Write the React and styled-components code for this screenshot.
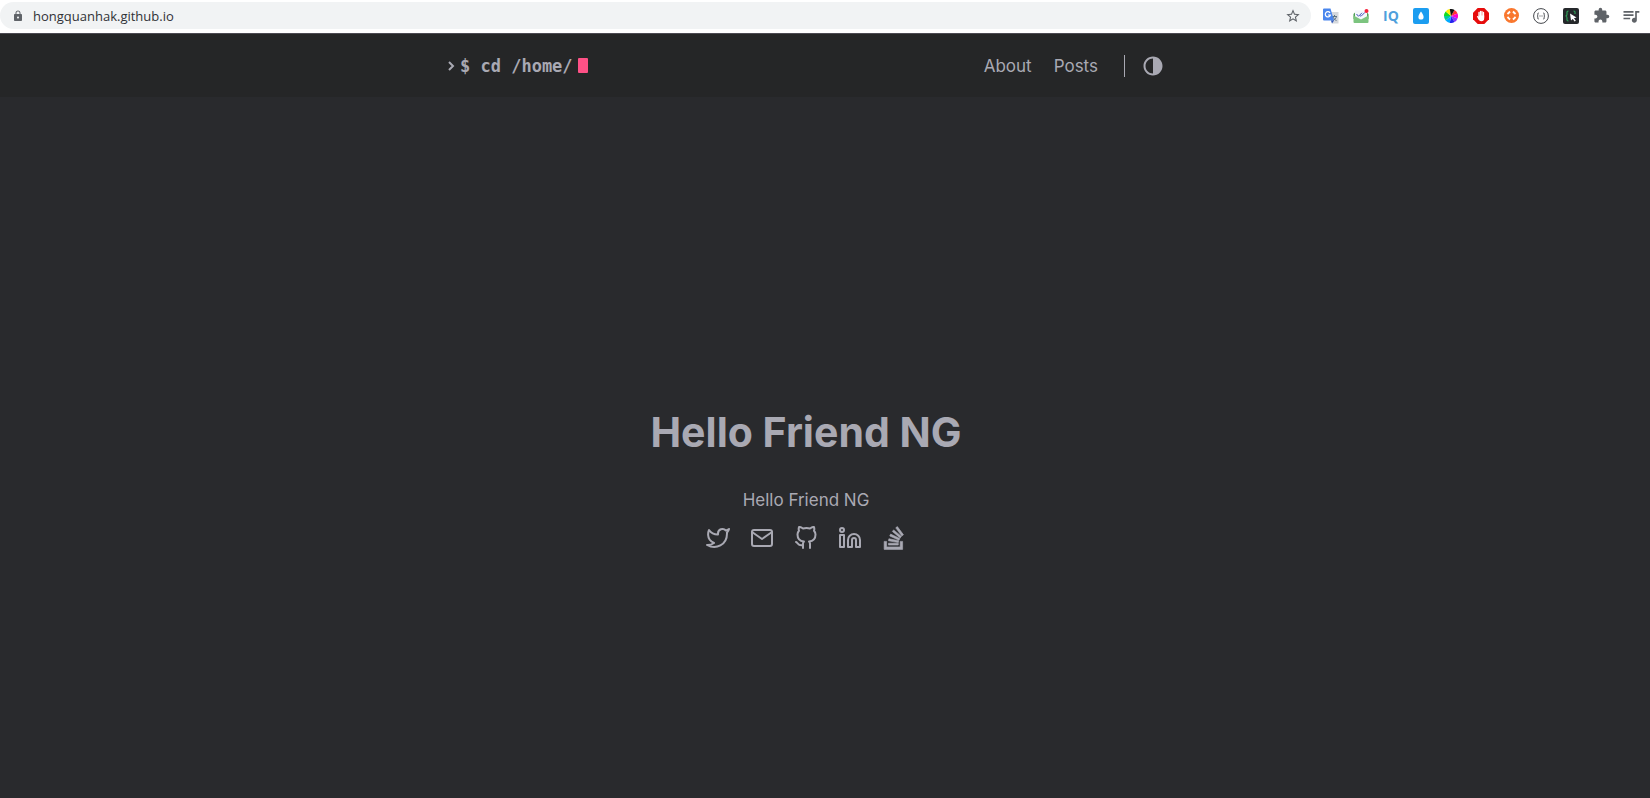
import React, { useState } from "react";
import styled, { createGlobalStyle } from "styled-components";
import { FiTwitter, FiMail, FiGithub, FiLinkedin } from "react-icons/fi";
import { MdLock, MdStarBorder, MdExtension, MdQueueMusic } from "react-icons/md";

const GlobalStyle = createGlobalStyle`
  * {
    box-sizing: border-box;
  }
  body {
    margin: 0;
    background: #292a2d;
    font-family: Inter, "Liberation Sans", sans-serif;
    font-size: 17px;
    color: #a9a9b3;
  }
  a {
    color: inherit;
    text-decoration: none;
  }
  button {
    display: flex;
    padding: 0;
    border: 0;
    background: none;
    color: inherit;
    cursor: pointer;
  }
`;

const Window = styled.div`
  display: flex;
  flex-direction: column;
  min-height: 100vh;
`;

const Toolbar = styled.div`
  display: flex;
  align-items: center;
  height: 34px;
  padding: 0 9px 2px 0;
  background: #fff;
  border-bottom: 1px solid #4c4a52;
  color: #5f6368;
`;

const AddressBar = styled.div`
  flex: 1;
  display: flex;
  align-items: center;
  gap: 9px;
  height: 27px;
  padding: 0 10px 0 12px;
  border-radius: 14px;
  background: #f1f3f4;
`;

const Address = styled.input`
  flex: 1;
  border: 0;
  padding: 0;
  outline: none;
  background: none;
  color: #303236;
  font: 13px "Open Sans", "Noto Sans", sans-serif;
`;

const Extensions = styled.div`
  display: flex;
  gap: 10px;
  margin-left: 10px;
`;

const Extension = styled.button`
  && {
    width: 20px;
    height: 20px;
    align-items: center;
    justify-content: center;
    color: ${(props) => props.$color || "#5f6368"};
    font: 700 14px "Open Sans", sans-serif;
  }
`;

const Page = styled.div`
  flex: 1;
  display: flex;
  flex-direction: column;
`;

const Header = styled.header`
  padding-right: 38px;
  background: #252627;
`;

const HeaderInner = styled.div`
  display: flex;
  align-items: center;
  justify-content: space-between;
  max-width: 760px;
  height: 63px;
  margin: 0 auto;
  padding: 0 20px;
`;

const Logo = styled.a`
  display: flex;
  align-items: center;
  font: 700 17px "DejaVu Sans Mono", monospace;

  svg {
    margin: 0 4px 0 1px;
  }
`;

const Cursor = styled.span`
  width: 10px;
  height: 15px;
  margin-left: 5px;
  border-radius: 1px;
  background: #fe5186;
`;

const Menu = styled.nav`
  display: flex;
  align-items: center;

  a {
    margin-right: 22px;
  }
`;

const ThemeToggle = styled.button`
  && {
    margin-left: 4px;
    padding: 0 2px 0 17px;
    border-left: 1px solid #a9a9b3;
  }
`;

const Main = styled.main`
  flex: 1;
  display: flex;
  flex-direction: column;
  align-items: center;
  justify-content: center;
  padding: 55px 38px 0 0;

  h1 {
    margin: 0 0 24px;
    font-size: 41px;
    line-height: 64px;
  }
  p {
    margin: 0 0 14px;
    line-height: 24px;
  }
`;

const Social = styled.div`
  display: flex;
  gap: 20px;

  a {
    display: flex;
  }
`;

const TranslateIcon = () => (
  <svg width="16" height="16" viewBox="0 0 16 16">
    <path d="M6 4h9.500v11.500H9z" fill="#d5d8dc" />
    <path d="M9 8.500h5M11.500 7v1.500M13.500 8.500c-.5 2-2 3-3.500 4M10 9c1 2 2 3 3.500 3.500" stroke="#5e7483" fill="none" />
    <path d="M1 .5h6.500L11 12.500H1a1 1 0 0 1-1-1v-10a1 1 0 0 1 1-1z" fill="#4a86ed" />
    <path d="M8 12.500h3l-2 3z" fill="#2d56ba" />
    <path d="M7 4.800a2.600 2.600 0 1 0 .4 2.200H5" stroke="#fff" strokeWidth="1.200" fill="none" />
  </svg>
);

const MailCheckIcon = () => (
  <svg width="16" height="16" viewBox="0 0 16 16">
    <path d="M.5 6L3 3.500h10L15.500 6v5H.5z" fill="#4f9d56" />
    <path d="M2 2.500h12v8L8 12.500l-6-2z" fill="#f4f6fc" />
    <path d="M.5 7.500L8 11.500l7.500-4V14a1 1 0 0 1-1 1h-13a1 1 0 0 1-1-1z" fill="#7cc47f" />
    <path d="M3.500 6l2 2.300L9 4.800M7.200 7.600l.8.700 4-4" stroke="#4555bb" fill="none" />
    <circle cx="13.500" cy="3" r="2" fill="#f5203a" />
  </svg>
);

const DropIcon = () => (
  <svg width="16" height="16" viewBox="0 0 16 16">
    <rect width="16" height="16" rx="2" fill="#1c9df0" />
    <path d="M8 3.500c1.500 2.200 2.600 3.700 2.600 5.400a2.600 2.600 0 0 1-5.200 0C5.400 7.200 6.500 5.700 8 3.500z" fill="#fff" />
  </svg>
);

const wheelColors = ["#f33", "#f0c", "#83f", "#22e", "#0af", "#0c9", "#1d2", "#fe0", "#111"];

const WheelIcon = () => (
  <svg width="14" height="14" viewBox="-7 -7 14 14">
    {wheelColors.map((color, i) => (
      <path key={color} d="M0 0L0-7A7 7 0 0 1 4.500-5.360z" fill={color} transform={`rotate(${i * 40 + 30})`} />
    ))}
  </svg>
);

const HandIcon = () => (
  <svg width="16" height="16" viewBox="0 0 16 16">
    <path d="M4.700 0h6.600L16 4.700v6.600L11.300 16H4.700L0 11.300V4.700z" fill="#e60c0c" />
    <path d="M6 4.500v4M7.500 3.500v5M9 3.500v5M10.500 4.500v5" stroke="#fff" strokeWidth="1.300" strokeLinecap="round" />
    <path d="M3.800 8.300l1.400-.2.800 1.200V7.500h5.200v3c0 1.700-1 2.700-2.800 2.700-1.600 0-2.500-.8-3.200-2.200z" fill="#fff" />
  </svg>
);

const LifebuoyIcon = () => (
  <svg width="15" height="15" viewBox="0 0 15 15">
    <circle cx="7.500" cy="7.500" r="7.500" fill="#f9772e" />
    <g fill="none" stroke="#fff" strokeWidth="2">
      <path d="M3.700 6.200a4 4 0 0 1 2.500-2.500" />
      <path d="M8.800 3.700a4 4 0 0 1 2.500 2.500" />
      <path d="M11.300 8.800a4 4 0 0 1-2.500 2.500" />
      <path d="M6.200 11.300a4 4 0 0 1-2.500-2.500" />
    </g>
  </svg>
);

const BracesIcon = () => (
  <svg width="16" height="16" viewBox="0 0 16 16" fill="none" stroke="#44474c">
    <circle cx="8" cy="8" r="7.400" />
    <path d="M5.800 5c-1.200 0-1 .5-1 1.500S4.500 8 4 8c.5 0 .8.500.8 1.500s-.2 1.500 1 1.500M10.200 5c1.200 0 1 .5 1 1.500s.3 1.500.8 1.500c-.5 0-.8.500-.8 1.500s.2 1.500-1 1.500" />
    <path d="M6.500 8h1M8.500 8h1" />
  </svg>
);

const InspectIcon = () => (
  <svg width="16" height="16" viewBox="0 0 16 16">
    <rect width="16" height="16" rx="2" fill="#25282b" />
    <path d="M5.500 3C3.500 3 4 4.500 4 6S3.500 8 2.500 8C3.500 8 4 8.500 4 10s-.5 3 1.500 3M10.500 3c2 0 1.500 1.500 1.500 3" stroke="#2f9e58" strokeWidth="1.200" fill="none" />
    <path d="M7 5.500l6.500 4-2.500.8 1.800 2.400-1.200.9-1.800-2.500L8 12.500z" fill="#fff" />
  </svg>
);

const ChevronIcon = () => (
  <svg width="9" height="10" viewBox="0 0 9 10" fill="none" stroke="currentColor" strokeWidth="2">
    <path d="M2 1l4 4-4 4" />
  </svg>
);

const ContrastIcon = () => (
  <svg width="22" height="22" viewBox="0 0 44 44" fill="currentColor">
    <path
      fillRule="evenodd"
      d="M22 41c10.500 0 19-8.500 19-19S32.500 3 22 3 3 11.500 3 22s8.500 19 19 19zM7 22c0-8.300 6.700-15 15-15v30c-8.300 0-15-6.700-15-15z"
    />
  </svg>
);

const StackOverflowIcon = () => (
  <svg width="24" height="24" viewBox="-1 -1 34 39" fill="currentColor" stroke="currentColor">
    <path d="M26 33v-9h4v13H0V24h4v9h22z" />
    <path d="M21.500 0l-2.700 2 9.900 13.300 2.700-2L21.500 0zM26 18.400L13.300 7.800l2.100-2.500 12.700 10.600-2.100 2.500zM9.100 15.200l15 7 1.400-3-15-7-1.400 3zm14 10.800l.7-3-16.100-3.300L7 23l16.100 3zM23 30H7v-3h16v3z" />
  </svg>
);

const extensions = [
  { name: "Translate", icon: <TranslateIcon /> },
  { name: "Mail checker", icon: <MailCheckIcon /> },
  { name: "IQ", icon: "IQ", color: "#4f9fdc" },
  { name: "Drop", icon: <DropIcon /> },
  { name: "Color wheel", icon: <WheelIcon /> },
  { name: "Ad blocker", icon: <HandIcon /> },
  { name: "Help", icon: <LifebuoyIcon /> },
  { name: "JSON viewer", icon: <BracesIcon /> },
  { name: "Inspector", icon: <InspectIcon /> },
  { name: "Extensions", icon: <MdExtension size={17} /> },
  { name: "Media controls", icon: <MdQueueMusic size={20} /> },
];

const social = [
  { name: "Twitter", icon: <FiTwitter size={24} /> },
  { name: "Email", icon: <FiMail size={24} /> },
  { name: "GitHub", icon: <FiGithub size={24} /> },
  { name: "LinkedIn", icon: <FiLinkedin size={24} /> },
  { name: "Stack Overflow", icon: <StackOverflowIcon /> },
];

const App = () => {
  const [url, setUrl] = useState("hongquanhak.github.io");

  return (
    <Window>
      <GlobalStyle />
      <Toolbar>
        <AddressBar>
          <MdLock size={12} />
          <Address aria-label="Address" value={url} onChange={(e) => setUrl(e.target.value)} />
          <button aria-label="Bookmark this page">
            <MdStarBorder size={16} />
          </button>
        </AddressBar>
        <Extensions>
          {extensions.map(({ name, icon, color }) => (
            <Extension key={name} aria-label={name} $color={color}>
              {icon}
            </Extension>
          ))}
        </Extensions>
      </Toolbar>
      <Page>
        <Header>
          <HeaderInner>
            <Logo href="#home">
              <ChevronIcon />
              $ cd /home/
              <Cursor />
            </Logo>
            <Menu>
              <a href="#about">About</a>
              <a href="#posts">Posts</a>
              <ThemeToggle aria-label="Toggle theme">
                <ContrastIcon />
              </ThemeToggle>
            </Menu>
          </HeaderInner>
        </Header>
        <Main>
          <h1>Hello Friend NG</h1>
          <p>Hello Friend NG</p>
          <Social>
            {social.map(({ name, icon }) => (
              <a key={name} href={`#${name}`} aria-label={name}>
                {icon}
              </a>
            ))}
          </Social>
        </Main>
      </Page>
    </Window>
  );
};

export default App;
